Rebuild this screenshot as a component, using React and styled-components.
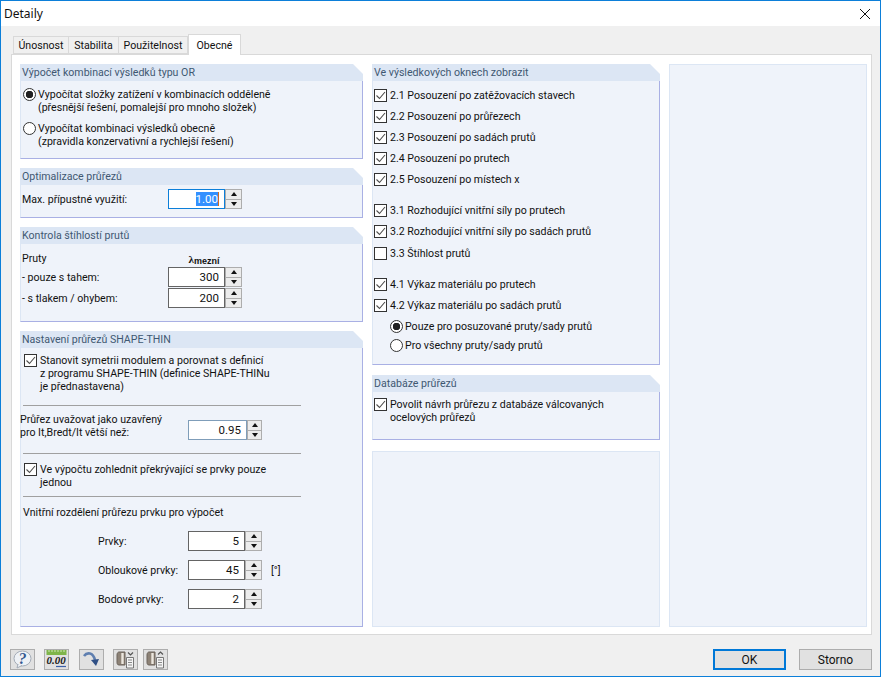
import React from 'react';
import styled, { createGlobalStyle } from 'styled-components';

const GlobalStyle = createGlobalStyle`
  html, body {
    margin: 0;
    padding: 0;
    background: #f0f0f0;
  }
  * {
    box-sizing: border-box;
  }
`;

const CheckMark = () => (
  <svg width="11" height="11" viewBox="0 0 11 11">
    <path d="M1.5 5.5 L4.5 8.5 L10 2" fill="none" stroke="#4d4d4d" strokeWidth="1.1" />
  </svg>
);

const CloseIcon = () => (
  <svg width="12" height="12" viewBox="0 0 12 12">
    <path d="M1 1 L11 11 M11 1 L1 11" stroke="#111" strokeWidth="1" />
  </svg>
);

const HelpIcon = () => (
  <svg width="21" height="19" viewBox="0 0 21 19">
    <ellipse cx="10.5" cy="8.5" rx="8.5" ry="7.5" fill="#eef1f5" stroke="#a3abb6" />
    <path d="M6 14 L5 18 L10 15.5" fill="#eef1f5" stroke="#a3abb6" />
    <text x="10.5" y="14" textAnchor="middle" fontFamily="Liberation Serif, serif" fontSize="16" fontWeight="700" fontStyle="italic" fill="#34588f">?</text>
  </svg>
);

const UnitsIcon = () => (
  <svg width="21" height="19" viewBox="0 0 21 19">
    <rect x="0.5" y="0" width="20" height="5" fill="#7fb54a" />
    <path d="M3 0v2M6 0v2M9 0v2M12 0v2M15 0v2M18 0v2" stroke="#cfe6b5" strokeWidth="1" />
    <text x="10" y="14" textAnchor="middle" fontFamily="Liberation Serif, serif" fontSize="11" fontStyle="italic" fontWeight="700" fill="#222">0.00</text>
    <path d="M10 16.5 H20" stroke="#3a5fa8" strokeWidth="1.2" />
  </svg>
);

const ArrowIcon = () => (
  <svg width="21" height="19" viewBox="0 0 21 19">
    <path d="M3 6 C6 2 12 2 14 10" fill="none" stroke="#5f7fb0" strokeWidth="2.6" />
    <path d="M10 10 L18 9 L15 16 Z" fill="#2f4f85" />
  </svg>
);

const DocsIcon = ({ up }) => (
  <svg width="21" height="19" viewBox="0 0 21 19">
    <path d="M4 2 H10 V15 H4 C2 15 2 13 2 12 V5 C2 3 3 2 4 2 Z" fill="#8d8276" stroke="#6b635b" />
    <path d="M7.5 3 V14" stroke="#ece7df" strokeWidth="2.4" />
    <path d="M11.5 7.5 H18.5 V18 H11.5 Z" fill="#f4f4f4" stroke="#777" />
    <path d="M13 10 H17 M13 12.5 H17 M13 15 H17" stroke="#888" />
    <path d={up ? 'M13 4.5 L15.5 2 L18 4.5' : 'M13 2.5 L15.5 5 L18 2.5'} fill="none" stroke="#555" strokeWidth="1.2" />
  </svg>
);

const Spinner = ({ value, width = 57, spin = 17, blueBorder, focused, drop }) => (
  <SpinBox $drop={drop}>
    <SpinField $width={width} $blue={blueBorder} $focused={focused}>
      {focused ? <Selected>{value}</Selected> : value}
    </SpinField>
    <SpinButtons $width={spin}>
      <SpinButton><UpArrow /></SpinButton>
      <SpinButton><DownArrow /></SpinButton>
    </SpinButtons>
  </SpinBox>
);

const CheckLine = ({ checked = true, top, flush, children }) => (
  <CheckRow $top={top} $flush={flush}>
    <CheckBox>{checked && <CheckMark />}</CheckBox>
    <OptionText>{children}</OptionText>
  </CheckRow>
);

const RadioLine = ({ selected, top, indent, children }) => (
  <RadioRow $top={top} $indent={indent}>
    <RadioDot $selected={selected} />
    <OptionText>{children}</OptionText>
  </RadioRow>
);

const Section = ({ title, height, grow, children }) => (
  <Group $height={height} $grow={grow}>
    <GroupHeader>{title}</GroupHeader>
    <GroupBody>{children}</GroupBody>
  </Group>
);

const App = () => {
  return (
    <Window>
      <GlobalStyle />
      <TitleBar>
        <TitleText>Detaily</TitleText>
        <CloseButton><CloseIcon /></CloseButton>
      </TitleBar>
      <DialogBody>
        <TabBar>
          <Tab $width={56}>Únosnost</Tab>
          <Tab $width={50}>Stabilita</Tab>
          <Tab $width={69}>Použitelnost</Tab>
          <Tab $width={53} $active>Obecné</Tab>
        </TabBar>
        <TabPanel>
          <LeftColumn>
            <Section title="Výpočet kombinací výsledků typu OR" height={95}>
              <RadioLine selected top={7}>Vypočítat složky zatížení v kombinacích odděleně<br />(přesnější řešení, pomalejší pro mnoho složek)</RadioLine>
              <RadioLine top={8}>Vypočítat kombinaci výsledků obecně<br />(zpravidla konzervativní a rychlejší řešení)</RadioLine>
            </Section>
            <Section title="Optimalizace průřezů" height={50}>
              <FieldRow $top={4}>
                <FieldLabel>Max. přípustné využití:</FieldLabel>
                <Spinner value="1.00" focused />
              </FieldRow>
            </Section>
            <Section title="Kontrola štíhlostí prutů" height={95}>
              <PrutyHead>
                <PlainText>Pruty</PlainText>
                <Lambda>λ<sub>mezní</sub></Lambda>
              </PrutyHead>
              <FieldRow $top={2}>
                <FieldLabel>- pouze s tahem:</FieldLabel>
                <Spinner value="300" />
              </FieldRow>
              <FieldRow $top={1}>
                <FieldLabel>- s tlakem / ohybem:</FieldLabel>
                <Spinner value="200" />
              </FieldRow>
            </Section>
            <Section title="Nastavení průřezů SHAPE-THIN" grow>
              <CheckLine top={6}>Stanovit symetrii modulem a porovnat s definicí<br />z programu SHAPE-THIN (definice SHAPE-THINu<br />je přednastavena)</CheckLine>
              <Divider $top={12} />
              <ClosedRow>
                <ClosedLabel>Průřez uvažovat jako uzavřený<br />pro It,Bredt/It větší než:</ClosedLabel>
                <Spinner value="0.95" width={59} spin={15} blueBorder drop={7} />
              </ClosedRow>
              <Divider $top={13} />
              <CheckLine top={9}>Ve výpočtu zohlednit překrývající se prvky pouze<br />jednou</CheckLine>
              <Divider $top={7} />
              <PartitionTitle>Vnitřní rozdělení průřezu prvku pro výpočet</PartitionTitle>
              <PartitionRow $top={12}>
                <FieldLabel>Prvky:</FieldLabel>
                <Spinner value="5" />
              </PartitionRow>
              <PartitionRow $top={9}>
                <FieldLabel>Obloukové prvky:</FieldLabel>
                <Spinner value="45" />
                <Unit>[°]</Unit>
              </PartitionRow>
              <PartitionRow $top={9}>
                <FieldLabel>Bodové prvky:</FieldLabel>
                <Spinner value="2" />
              </PartitionRow>
            </Section>
          </LeftColumn>
          <MiddleColumn>
            <Section title="Ve výsledkových oknech zobrazit" height={301}>
              <CheckLine flush top={8}>2.1 Posouzení po zatěžovacích stavech</CheckLine>
              <CheckLine flush top={8}>2.2 Posouzení po průřezech</CheckLine>
              <CheckLine flush top={8}>2.3 Posouzení po sadách prutů</CheckLine>
              <CheckLine flush top={8}>2.4 Posouzení po prutech</CheckLine>
              <CheckLine flush top={8}>2.5 Posouzení po místech x</CheckLine>
              <CheckLine flush top={18}>3.1 Rozhodující vnitřní síly po prutech</CheckLine>
              <CheckLine flush top={8}>3.2 Rozhodující vnitřní síly po sadách prutů</CheckLine>
              <CheckLine flush checked={false} top={9}>3.3 Štíhlost prutů</CheckLine>
              <CheckLine flush top={18}>4.1 Výkaz materiálu po prutech</CheckLine>
              <CheckLine flush top={8}>4.2 Výkaz materiálu po sadách prutů</CheckLine>
              <RadioLine selected top={8} indent={15}>Pouze pro posuzované pruty/sady prutů</RadioLine>
              <RadioLine top={6} indent={15}>Pro všechny pruty/sady prutů</RadioLine>
            </Section>
            <Section title="Databáze průřezů" height={65}>
              <CheckLine flush top={6}>Povolit návrh průřezu z databáze válcovaných<br />ocelových průřezů</CheckLine>
            </Section>
            <EmptyGroup />
          </MiddleColumn>
          <RightColumn />
        </TabPanel>
        <Footer>
          <IconButtons>
            <IconButton $gap={0}><HelpIcon /></IconButton>
            <IconButton $gap={9}><UnitsIcon /></IconButton>
            <IconButton $gap={10}><ArrowIcon /></IconButton>
            <IconButton $gap={9}><DocsIcon /></IconButton>
            <IconButton $gap={5}><DocsIcon up /></IconButton>
          </IconButtons>
          <ActionButton $primary>OK</ActionButton>
          <ActionButton>Storno</ActionButton>
        </Footer>
      </DialogBody>
    </Window>
  );
};

export default App;

// styled components
const Window = styled.div`
  width: 881px;
  height: 677px;
  border: 1px solid #0c7fd9;
  display: flex;
  flex-direction: column;
  background: #f0f0f0;
  font-family: Roboto, "Liberation Sans", sans-serif;
  font-size: 10.6px;
  color: #111;
  overflow: hidden;
`;

const TitleBar = styled.div`
  height: 25px;
  background: #fff;
  display: flex;
  align-items: center;
  justify-content: space-between;
  padding: 0 9px 0 3px;
  flex: none;
`;

const TitleText = styled.span`
  font-family: "Noto Sans", sans-serif;
  font-size: 12px;
`;

const CloseButton = styled.div`
  display: flex;
`;

const DialogBody = styled.div`
  flex: 1;
  display: flex;
  flex-direction: column;
  padding: 8px 9px 0 10px;
`;

const TabBar = styled.div`
  display: flex;
  align-items: flex-end;
  height: 20px;
  padding-left: 2px;
  position: relative;
  z-index: 1;
`;

const Tab = styled.div`
  width: ${(p) => p.$width}px;
  height: ${(p) => (p.$active ? 21 : 18)}px;
  margin-bottom: ${(p) => (p.$active ? -1 : 0)}px;
  background: ${(p) => (p.$active ? '#fff' : '#f0f0f0')};
  border: 1px solid #d9d9d9;
  border-left-width: ${(p) => (p.$active ? 1 : 0)}px;
  border-bottom: ${(p) => (p.$active ? 'none' : '1px solid #d9d9d9')};
  display: flex;
  align-items: center;
  justify-content: center;
  padding-top: ${(p) => (p.$active ? 0 : 1)}px;
  &:first-child {
    border-left-width: 1px;
  }
`;

const TabPanel = styled.div`
  height: 581px;
  width: 861px;
  background: #fff;
  border: 1px solid #d9d9d9;
  padding: 9px 4px 7px 8px;
  display: flex;
  gap: 9px;
`;

const LeftColumn = styled.div`
  width: 343px;
  display: flex;
  flex-direction: column;
  gap: 9px;
`;

const MiddleColumn = styled.div`
  width: 288px;
  display: flex;
  flex-direction: column;
  gap: 10px;
`;

const RightColumn = styled.div`
  flex: 1;
  background: #eff3fa;
  border: 1px solid #dce6f4;
`;

const Group = styled.section`
  height: ${(p) => (p.$height ? `${p.$height}px` : 'auto')};
  flex: ${(p) => (p.$grow ? 1 : 'none')};
  display: flex;
  flex-direction: column;
`;

const GroupHeader = styled.div`
  height: 17px;
  flex: none;
  padding: 2px 0 0 2px;
  background: #dce6f4;
  color: #3f5872;
  line-height: 14px;
  clip-path: polygon(0 0, calc(100% - 10px) 0, 100% 10px, 100% 100%, 0 100%);
`;

const GroupBody = styled.div`
  flex: 1;
  min-height: 0;
  background: #eff3fa;
  border-right: 1px solid #a9b0e4;
  border-bottom: 1px solid #a9b0e4;
  border-left: 1px solid #dce6f4;
  padding: 0 2px;
`;

const EmptyGroup = styled.div`
  flex: 1;
  margin-top: 1px;
  background: #eff3fa;
  border: 1px solid #dce6f4;
`;

const OptionText = styled.div`
  line-height: 13px;
`;

const CheckRow = styled.div`
  display: flex;
  align-items: flex-start;
  gap: 3px;
  margin-top: ${(p) => p.$top}px;
  margin-left: ${(p) => (p.$flush ? -1 : 1)}px;
`;

const CheckBox = styled.div`
  width: 13px;
  height: 13px;
  flex: none;
  background: #fff;
  border: 1px solid #333;
  display: flex;
  align-items: center;
  justify-content: center;
`;

const RadioRow = styled.div`
  display: flex;
  align-items: flex-start;
  gap: 2px;
  margin-top: ${(p) => p.$top}px;
  padding-left: ${(p) => p.$indent || 0}px;
`;

const RadioDot = styled.div`
  width: 13px;
  height: 13px;
  flex: none;
  border-radius: 50%;
  border: 1px solid #333;
  background: ${(p) => (p.$selected ? 'radial-gradient(circle, #222 0 3.5px, #fff 4px)' : '#fff')};
`;

const FieldRow = styled.div`
  display: flex;
  align-items: center;
  margin-top: ${(p) => p.$top}px;
  margin-left: -1px;
  & > span:first-child {
    width: 146px;
  }
`;

const FieldLabel = styled.span`
  flex: none;
`;

const PlainText = styled.span`
  margin-left: -1px;
  line-height: 13px;
`;

const PrutyHead = styled.div`
  display: flex;
  align-items: center;
  height: 13px;
  margin-top: 8px;
  width: 100%;
`;

const Lambda = styled.span`
  margin-left: 142px;
  font-family: "Liberation Serif", serif;
  font-size: 11px;
  font-weight: 700;
  & sub {
    font-family: "Liberation Sans", sans-serif;
    font-size: 9px;
    vertical-align: baseline;
    position: relative;
    top: 1px;
  }
`;

const SpinBox = styled.div`
  display: flex;
  flex: none;
  height: 20px;
  margin-top: ${(p) => p.$drop || 0}px;
`;

const SpinField = styled.div`
  width: ${(p) => p.$width}px;
  height: 100%;
  background: #fff;
  border: 1px solid ${(p) => (p.$focused ? '#0c7fd9' : p.$blue ? '#7f9db9' : '#646464')};
  text-align: right;
  padding-right: 5px;
  line-height: 18px;
  font-size: 11.5px;
`;

const Selected = styled.span`
  background: #3390ff;
  color: #fff;
  border-right: 1px solid #d06a20;
`;

const SpinButtons = styled.div`
  width: ${(p) => p.$width}px;
  height: 100%;
  display: flex;
  flex-direction: column;
  gap: 1px;
  border: 1px solid #adadad;
  background: #adadad;
`;

const SpinButton = styled.div`
  flex: 1;
  background: #ececec;
  display: flex;
  align-items: center;
  justify-content: center;
`;

const UpArrow = styled.div`
  width: 0;
  height: 0;
  border-left: 3.5px solid transparent;
  border-right: 3.5px solid transparent;
  border-bottom: 4px solid #111;
`;

const DownArrow = styled.div`
  width: 0;
  height: 0;
  border-left: 3.5px solid transparent;
  border-right: 3.5px solid transparent;
  border-top: 4px solid #111;
`;

const Divider = styled.div`
  width: 278px;
  height: 1px;
  margin-top: ${(p) => p.$top}px;
  background: #a0a0a0;
`;

const ClosedRow = styled.div`
  display: flex;
  align-items: flex-start;
  margin-top: 7px;
  margin-left: -3px;
`;

const ClosedLabel = styled.div`
  width: 168px;
  line-height: 13px;
`;

const PartitionTitle = styled.div`
  margin-top: 9px;
  line-height: 13px;
`;

const PartitionRow = styled.div`
  display: flex;
  align-items: center;
  margin-top: ${(p) => p.$top}px;
  padding-left: 75px;
  & > span:first-child {
    width: 90px;
  }
`;

const Unit = styled.span`
  margin-left: 9px;
`;

const Footer = styled.div`
  display: flex;
  align-items: flex-start;
  margin: 14px -1px 0 -1px;
  gap: 13px;
`;

const IconButtons = styled.div`
  display: flex;
  flex: 1;
`;

const IconButton = styled.div`
  width: 25px;
  height: 21px;
  background: #e1e1e1;
  border: 1px solid #adadad;
  display: flex;
  align-items: center;
  justify-content: center;
  margin-left: ${(p) => p.$gap}px;
`;

const ActionButton = styled.div`
  width: 73px;
  height: 21px;
  background: #e1e1e1;
  border: ${(p) => (p.$primary ? '2px solid #0078d7' : '1px solid #adadad')};
  display: flex;
  align-items: center;
  justify-content: center;
  font-size: 12px;
`;
